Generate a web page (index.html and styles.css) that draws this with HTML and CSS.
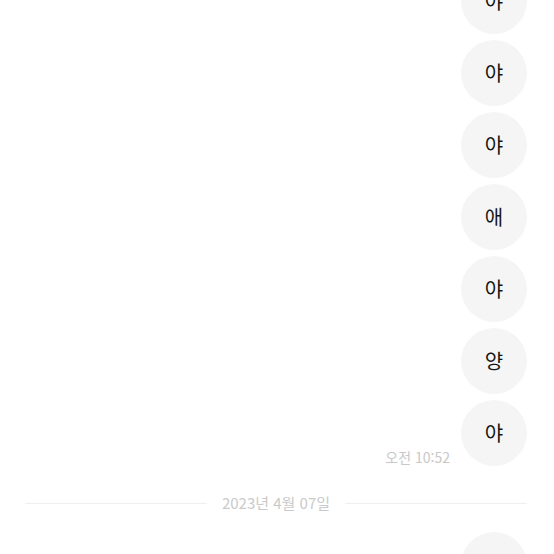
FILE: index.html
```html
<!DOCTYPE html>
<html lang="ko">
<head>
<meta charset="utf-8">
<link rel="stylesheet" href="styles.css">
</head>
<body>
<div class="chat">
  <div class="row"><div class="bubble">야</div></div>
  <div class="row"><div class="bubble">야</div></div>
  <div class="row"><div class="bubble">야</div></div>
  <div class="row"><div class="bubble">애</div></div>
  <div class="row"><div class="bubble">야</div></div>
  <div class="row"><div class="bubble">양</div></div>
  <div class="row"><span class="time">오전 10:52</span><div class="bubble">야</div></div>
  <div class="date"><span class="line"></span><span class="date-text">2023년 4월 07일</span><span class="line"></span></div>
  <div class="row"><div class="bubble"></div></div>
</div>
</body>
</html>
```

FILE: styles.css
```css
html, body {
  margin: 0;
  padding: 0;
  background: #ffffff;
  overflow: hidden;
}
body {
  width: 554px;
  height: 554px;
  font-family: "Noto Sans CJK KR", "Noto Sans", sans-serif;
}
.chat {
  display: flex;
  flex-direction: column;
  gap: 6px;
  margin-top: -32px;
}
.row {
  display: flex;
  justify-content: flex-end;
  align-items: flex-end;
  gap: 11px;
  padding-right: 27px;
}
.bubble {
  width: 66px;
  height: 66px;
  border-radius: 50%;
  background: #f5f5f5;
  color: #151515;
  font-size: 20px;
  line-height: 66px;
  text-align: center;
  flex: none;
}
.time {
  font-size: 14px;
  line-height: 16px;
  color: #c8c8c8;
  padding-bottom: 1px;
}
.date {
  display: flex;
  align-items: center;
  gap: 15px;
  padding: 0 27px 0 25px;
  margin-top: 21px;
  margin-bottom: 13px;
  height: 20px;
}
.line {
  flex: 1;
  height: 1px;
  background: #efefef;
}
.date-text {
  font-size: 15px;
  line-height: 20px;
  color: #cacaca;
}
```
